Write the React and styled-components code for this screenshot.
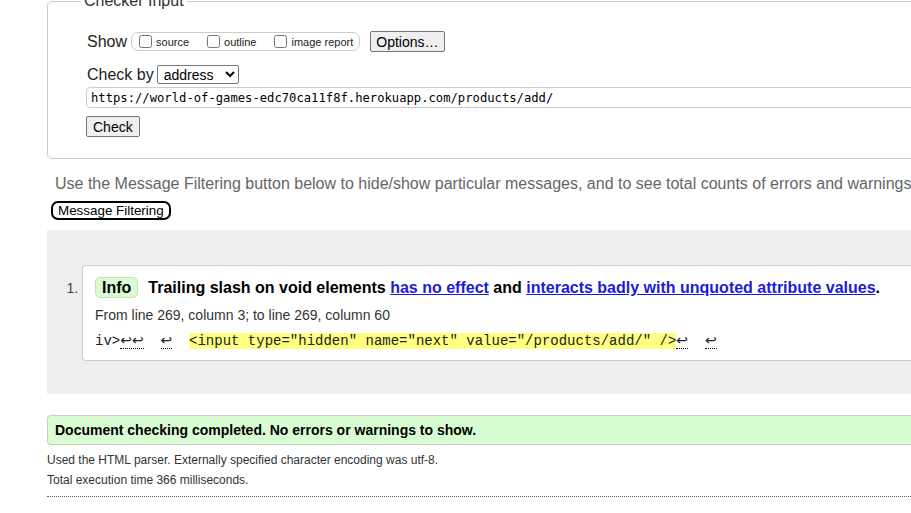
import React from "react";
import styled, { createGlobalStyle } from "styled-components";

const Global = createGlobalStyle`
  html, body { margin: 0; padding: 0; overflow: hidden; background: #fff; }
  body { font-family: "Liberation Sans", Arial, sans-serif; color: #000; }
`;

const Page = styled.div`
  width: 1180px;
  margin: -8px 0 0 47px;
`;

const Fieldset = styled.fieldset`
  margin: 0;
  min-width: 0;
  border: 1px solid #ccc;
  border-radius: 5px;
  padding: 21px 20px 21px 39px;
`;

const Legend = styled.legend`
  font-size: 16px;
  line-height: 18px;
  color: #333;
  padding: 0 3px;
  margin-left: -6px;
`;

const Row = styled.div`
  display: flex;
  align-items: center;
  margin-top: ${(p) => p.$mt || 0}px;
  font-size: 16px;
  color: #222;
`;

const OptionsBox = styled.div`
  display: flex;
  align-items: center;
  height: 17px;
  margin-left: 4px;
  padding: 0 6px 0 6px;
  border: 1px solid #ccc;
  border-radius: 7px;
`;

const CheckLabel = styled.label`
  display: flex;
  align-items: center;
  font-size: 11px;
  color: #222;
  margin-right: ${(p) => (p.$last ? 0 : 17)}px;
  input {
    width: 13px;
    height: 13px;
    margin: 0 4px 0 1px;
  }
`;

const Button = styled.button`
  font-family: "Liberation Sans", Arial, sans-serif;
  font-size: 14px;
  height: 21px;
  padding: 0 5px;
  background: #efefef;
  color: #000;
  border: 1px solid #767676;
  border-radius: 2px;
  margin-left: ${(p) => p.$ml || 0}px;
`;

const Select = styled.select`
  font-family: "Liberation Sans", Arial, sans-serif;
  font-size: 14px;
  width: 82px;
  height: 19px;
  margin-left: 3px;
  padding: 0 0 0 2px;
  border: 1px solid #767676;
  border-radius: 2px;
  background: #fff;
  color: #000;
`;

const UrlInput = styled.input`
  display: block;
  box-sizing: border-box;
  width: 1000px;
  height: 21px;
  margin: 3px 0 0 -1px;
  padding: 0 4px;
  border: 1px solid #ccc;
  border-radius: 4px;
  font-family: "DejaVu Sans Mono", monospace;
  font-size: 12.2px;
  color: #000;
`;

const CheckButton = styled(Button)`
  display: block;
  margin: 8px 0 0 -1px;
  padding: 0 6px;
`;

const Intro = styled.p`
  margin: 16px 0 0 8px;
  font-size: 16px;
  line-height: 18px;
  color: #666;
  white-space: nowrap;
`;

const FilterButton = styled.button`
  display: block;
  margin: 8px 0 0 4px;
  height: 19px;
  padding: 0 5px;
  font-family: "Liberation Sans", Arial, sans-serif;
  font-size: 13.4px;
  background: #fff;
  color: #000;
  border: 2px solid #000;
  border-radius: 7px;
`;

const Results = styled.div`
  margin-top: 10px;
  background: #eee;
  padding: 35px 0 33px;
`;

const List = styled.ol`
  margin: 0;
  padding-left: 35px;
  li::marker {
    font-size: 14px;
    color: #444;
  }
`;

const Message = styled.li`
  background: #fff;
  border: 1px solid #ccc;
  border-right: none;
  border-radius: 4px 0 0 4px;
  padding: 11px 12px 10px;
  font-size: 14px;
`;

const Head = styled.p`
  margin: 0;
  font-size: 16px;
  line-height: 21px;
  font-weight: bold;
  white-space: nowrap;
`;

const Badge = styled.strong`
  display: inline-block;
  height: 19px;
  line-height: 19px;
  padding: 0 6px;
  margin-right: 10px;
  background: #d9fcd3;
  border: 1px solid #bfe3b6;
  border-radius: 5px;
`;

const Link = styled.a`
  color: #1b1bdc;
  text-decoration: underline;
`;

const Location = styled.p`
  margin: 9px 0 0;
  font-size: 14px;
  line-height: 16px;
  color: #333;
`;

const Extract = styled.p`
  margin: 8px 0 0;
  font-family: "Liberation Mono", "Courier New", monospace;
  font-size: 14px;
  line-height: 18px;
  color: #222;
  white-space: pre;
`;

const Lf = styled.span`
  border-bottom: 1px dotted #000;
  font-family: "DejaVu Sans", sans-serif;
  font-size: 14px;
`;

const Mark = styled.mark`
  background: #ffff80;
  color: #222;
`;

const Success = styled.p`
  margin: 21px 0 0;
  height: 28px;
  line-height: 28px;
  padding-left: 7px;
  background: #d9fdd2;
  border: 1px solid #ccc;
  border-right: none;
  border-radius: 4px 0 0 4px;
  font-size: 14px;
  font-weight: bold;
  color: #000;
`;

const Stats = styled.p`
  margin: ${(p) => p.$mt || 0}px 0 0;
  font-size: 12px;
  line-height: 20px;
  color: #333;
`;

const Divider = styled.hr`
  margin: 6px 0 0;
  border: none;
  border-top: 1px dotted #666;
`;

export default function App() {
  return (
    <>
      <Global />
      <Page>
        <Fieldset>
          <Legend>Checker Input</Legend>
          <Row>
            Show
            <OptionsBox>
              <CheckLabel>
                <input type="checkbox" />
                source
              </CheckLabel>
              <CheckLabel>
                <input type="checkbox" />
                outline
              </CheckLabel>
              <CheckLabel $last>
                <input type="checkbox" />
                image report
              </CheckLabel>
            </OptionsBox>
            <Button $ml={10}>Options…</Button>
          </Row>
          <Row $mt={13}>
            Check by
            <Select defaultValue="address">
              <option value="address">address</option>
              <option value="file">file upload</option>
              <option value="text">text input</option>
            </Select>
          </Row>
          <UrlInput
            readOnly
            value="https://world-of-games-edc70ca11f8f.herokuapp.com/products/add/"
          />
          <CheckButton>Check</CheckButton>
        </Fieldset>

        <Intro>
          Use the Message Filtering button below to hide/show particular messages, and to see total counts of errors and warnings.
        </Intro>
        <FilterButton>Message Filtering</FilterButton>

        <Results>
          <List>
            <Message>
              <Head>
                <Badge>Info</Badge>
                Trailing slash on void elements <Link href="#">has no effect</Link> and{" "}
                <Link href="#">interacts badly with unquoted attribute values</Link>.
              </Head>
              <Location>From line 269, column 3; to line 269, column 60</Location>
              <Extract>
                iv&gt;<Lf>↩↩</Lf>  <Lf>↩</Lf>  <Mark>&lt;input type="hidden" name="next" value="/products/add/" /&gt;</Mark>
                <Lf>↩</Lf>  <Lf>↩</Lf>
              </Extract>
            </Message>
          </List>
        </Results>

        <Success>Document checking completed. No errors or warnings to show.</Success>
        <Stats $mt={5}>Used the HTML parser. Externally specified character encoding was utf-8.</Stats>
        <Stats>Total execution time 366 milliseconds.</Stats>
        <Divider />
      </Page>
    </>
  );
}
